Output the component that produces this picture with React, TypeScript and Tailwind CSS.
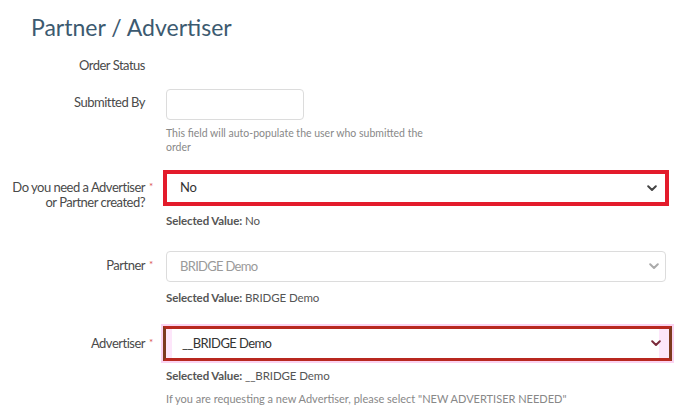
import React from "react";

function Chevron({ color }: { color: string }) {
  return (
    <svg width="10" height="7" viewBox="0 0 10 7" className="shrink-0">
      <path d="M1.2 1.3 L5 5 L8.8 1.3" fill="none" stroke={color} strokeWidth="2" strokeLinecap="round" strokeLinejoin="round" />
    </svg>
  );
}

function Label({ children, star, pt }: { children: React.ReactNode; star?: boolean; pt: string }) {
  return (
    <div className={`flex w-[166px] shrink-0 ${pt}`}>
      <div className="w-[145px] text-right text-[13px] leading-[15px] tracking-[-0.5px] text-[#4a4a4a]">{children}</div>
      <div className="w-[21px] pl-[4px] text-[10px] leading-[12px] text-[#d9534f]">{star ? "*" : ""}</div>
    </div>
  );
}

function SelectedValue({ value, mt }: { value: string; mt: string }) {
  return (
    <div className={`${mt} text-[11.5px] leading-[16px] tracking-[-0.1px] text-[#555]`}>
      <span className="font-bold">Selected Value:</span> {value}
    </div>
  );
}

export default function App() {
  return (
    <div className="w-[688px] h-[417px] overflow-hidden bg-white font-['Lato','Noto_Sans',sans-serif] text-[#555]">
      <h1 className="pl-[31px] pt-[12px] text-[23px] leading-[30px] text-[#3c5a70]">Partner / Advertiser</h1>

      <div className="mt-[16px] flex">
        <Label pt="pt-0">Order Status</Label>
      </div>

      <div className="mt-[16px] flex">
        <Label pt="pt-[6px]">Submitted By</Label>
        <div>
          <div className="h-[31px] w-[138px] rounded-[4px] border border-[#dcdcdc] bg-white" />
          <div className="mt-[6px] w-[275px] text-[10.5px] leading-[14px] text-[#888]">
            This field will auto-populate the user who submitted the order
          </div>
        </div>
      </div>

      <div className="mt-[16px] flex">
        <Label star pt="pt-[10px]">
          Do you need a Advertiser or Partner created?
        </Label>
        <div>
          <div className="-ml-[3px] flex h-[36px] w-[506px] items-center justify-between border-4 border-[#e31b2b] bg-white pl-[13px] pr-[8px]">
            <span className="text-[13px] tracking-[-0.3px] text-[#333]">No</span>
            <Chevron color="#444" />
          </div>
          <SelectedValue value="No" mt="mt-[7px]" />
        </div>
      </div>

      <div className="mt-[22px] flex">
        <Label star pt="pt-[7px]">Partner</Label>
        <div>
          <div className="flex h-[31px] w-[500px] items-center justify-between rounded-[4px] border border-[#dcdcdc] bg-white pl-[13px] pr-[6px]">
            <span className="text-[13px] tracking-[-0.7px] text-[#9a9a9a]">BRIDGE Demo</span>
            <Chevron color="#aaa" />
          </div>
          <SelectedValue value="BRIDGE Demo" mt="mt-[8px]" />
        </div>
      </div>

      <div className="mt-[20px] flex">
        <Label star pt="pt-[10px]">Advertiser</Label>
        <div>
          <div className="-ml-[3px] flex h-[35px] w-[509px] items-center justify-between border-[3px] border-[#b8281f] border-l-[#7c3b1e] border-r-[#7c3b1e] bg-white pl-[16px] pr-[8px] shadow-[0_0_0_2px_#fbd3f1,inset_6px_0_0_#fde6fa,inset_-10px_0_0_#fde6fa]">
            <span className="text-[13px] tracking-[-0.6px] text-[#333]">__BRIDGE Demo</span>
            <Chevron color="#7a2a3a" />
          </div>
          <SelectedValue value="__BRIDGE Demo" mt="mt-[7px]" />
          <div className="mt-[8px] text-[11px] leading-[14px] text-[#888]">
            If you are requesting a new Advertiser, please select "NEW ADVERTISER NEEDED"
          </div>
        </div>
      </div>
    </div>
  );
}
